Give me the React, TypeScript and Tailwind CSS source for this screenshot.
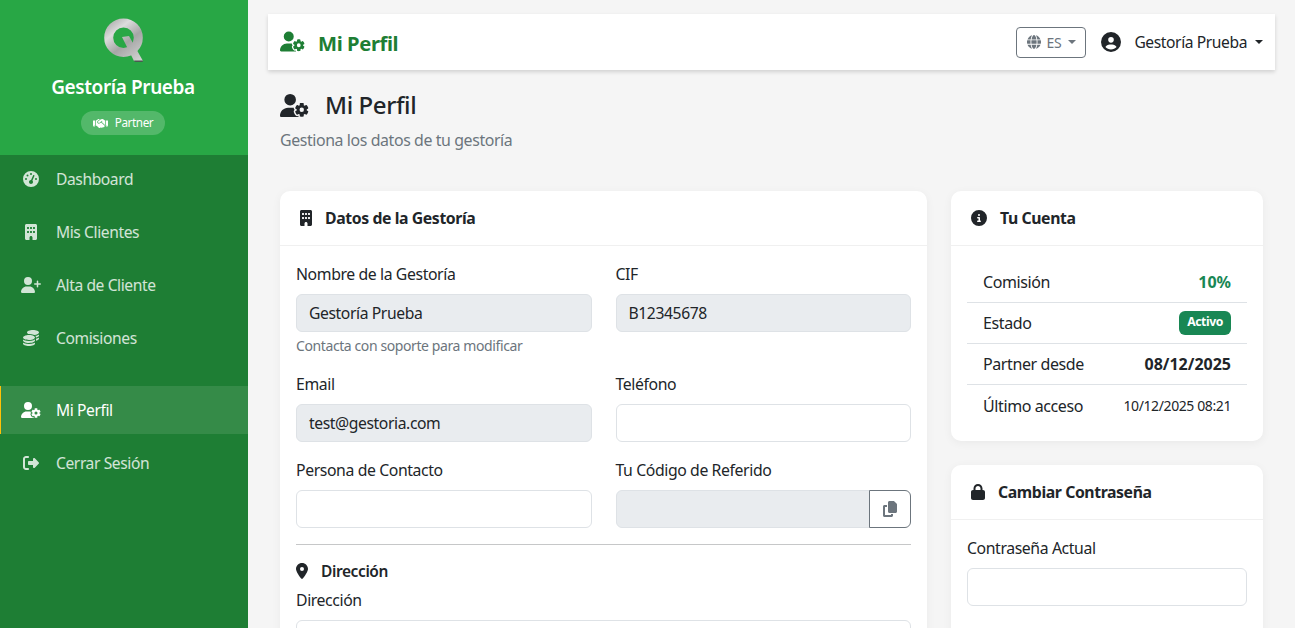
import React from 'react'
import {
  FaBuilding,
  FaCircleInfo,
  FaCircleUser,
  FaCoins,
  FaCopy,
  FaGaugeHigh,
  FaGlobe,
  FaHandshake,
  FaLocationDot,
  FaLock,
  FaRightFromBracket,
  FaUserGear,
  FaUserPlus,
} from 'react-icons/fa6'

const QLogo = () => (
  <svg viewBox="0 0 40 46" className="w-[40px] h-[46px]">
    <defs>
      <linearGradient id="qMetal" gradientUnits="userSpaceOnUse" x1="4" y1="2" x2="36" y2="42">
        <stop offset="0" stopColor="#a2a2a2" />
        <stop offset="0.3" stopColor="#dcdcdc" />
        <stop offset="0.6" stopColor="#a6a6a6" />
        <stop offset="1" stopColor="#cfcfcf" />
      </linearGradient>
    </defs>
    <circle cx="20.500" cy="20.700" r="14.800" fill="none" stroke="url(#qMetal)" strokeWidth="9" />
    <path fill="url(#qMetal)" d="M19 20 L26 19 L40 44 L31 44 Z" />
    <path fill="#4a5a50" d="M31 43.500 L40 43.500 L39.500 45 L32 45 Z" />
  </svg>
)

type NavItemProps = {
  icon: React.ReactNode
  label: string
  active?: boolean
}

const NavItem: React.FC<NavItemProps> = ({ icon, label, active }) => (
  <a
    className={
      active
        ? 'flex items-center h-12 bg-white/10 border-l border-[#ffc107] pl-[20px] text-white'
        : 'flex items-center h-12 border-l border-transparent pl-[20px] text-white/80'
    }
  >
    <span className="w-[20px] mr-[15px] flex justify-center text-[16px]">{icon}</span>
    <span className="mt-[2px] text-[15.6px]">{label}</span>
  </a>
)

const Sidebar = () => (
  <aside className="w-[248px] shrink-0 h-full bg-[#1e7e34]">
    <div className="h-[155px] bg-[#28a745] flex flex-col items-center pt-[17px] pr-[2px]">
      <QLogo />
      <h2 className="mt-[11px] text-[19px] leading-[27px] font-semibold text-white">Gestoría Prueba</h2>
      <span className="mt-[10px] h-[24px] w-[84px] rounded-full bg-white/20 flex items-center justify-center gap-[7px] text-white text-[11.7px]">
        <FaHandshake className="text-[15px]" />
        Partner
      </span>
    </div>
    <nav className="flex flex-col gap-[5px]">
      <NavItem icon={<FaGaugeHigh />} label="Dashboard" />
      <NavItem icon={<FaBuilding />} label="Mis Clientes" />
      <NavItem icon={<FaUserPlus className="text-[20px]" />} label="Alta de Cliente" />
      <NavItem icon={<FaCoins />} label="Comisiones" />
      <div className="h-[14px]" />
      <NavItem icon={<FaUserGear className="text-[20px]" />} label="Mi Perfil" active />
      <NavItem icon={<FaRightFromBracket />} label="Cerrar Sesión" />
    </nav>
  </aside>
)

const TopBar = () => (
  <header className="h-[56px] bg-white shadow-[0_2px_4px_rgba(0,0,0,0.15)] flex items-center justify-between pl-[12px] pr-[12px]">
    <div className="flex items-center gap-[13px] text-[#1e7e34]">
      <FaUserGear className="text-[25px]" />
      <span className="mt-[2px] text-[20.2px] font-bold">Mi Perfil</span>
    </div>
    <div className="flex items-center">
      <button className="w-[70px] h-[31px] border border-[#6c757d] rounded-[4px] flex items-center justify-center gap-[6px] text-[#6c757d] text-[14px]">
        <FaGlobe className="text-[14px]" />
        ES
        <span className="ml-[1px] border-x-[4px] border-x-transparent border-t-[4px] border-t-[#6c757d]" />
      </button>
      <div className="ml-[15px] flex items-center text-[#212529]">
        <FaCircleUser className="text-[20px]" />
        <span className="mt-[2px] ml-[13px] text-[15.6px]">Gestoría Prueba</span>
        <span className="ml-[8px] border-x-[4.5px] border-x-transparent border-t-[4.5px] border-t-[#212529]" />
      </div>
    </div>
  </header>
)

const Field: React.FC<{
  label: string
  value?: string
  disabled?: boolean
  help?: string
  copy?: boolean
}> = ({ label, value, disabled, help, copy }) => (
  <div>
    <label className="block h-[24px] leading-[24px] mb-[8px] text-[15.8px] text-[#212529]">{label}</label>
    <div className="flex">
      <div
        className={
          (disabled ? 'bg-[#e9ecef] ' : 'bg-white ') +
          (copy ? 'rounded-l-[6px] ' : 'rounded-[6px] ') +
          'flex-1 h-[38px] border border-[#dee2e6] pt-[2px] px-[12px] flex items-center text-[15.7px] text-[#212529]'
        }
      >
        {value}
      </div>
      {copy && (
        <button className="w-[42px] h-[38px] -ml-px border border-[#6c757d] rounded-r-[6px] bg-white flex items-center justify-center text-[#6c757d]">
          <FaCopy className="text-[16px]" />
        </button>
      )}
    </div>
    {help && <p className="mt-[3px] h-[21px] leading-[21px] text-[14px] text-[#6c757d]">{help}</p>}
  </div>
)

const Card: React.FC<{
  icon: React.ReactNode
  title: string
  children: React.ReactNode
}> = ({ icon, title, children }) => (
  <section className="bg-white rounded-[10px] shadow-[0_2px_10px_rgba(0,0,0,0.05)]">
    <div className="h-[55px] border-b border-[#f0f0f0] px-[20px] flex items-center gap-[13px] text-[#212529]">
      {icon}
      <h3 className="mt-[2px] text-[15.8px] font-bold">{title}</h3>
    </div>
    {children}
  </section>
)

const InfoRow: React.FC<{ label: string; last?: boolean; children: React.ReactNode }> = ({
  label,
  last,
  children,
}) => (
  <div
    className={
      (last ? '' : 'border-b border-[#dee2e6] ') +
      'h-[41px] px-[16px] flex items-center justify-between text-[16px] text-[#212529]'
    }
  >
    <span>{label}</span>
    {children}
  </div>
)

const App = () => (
  <div className="h-screen flex overflow-hidden bg-[#f5f5f5] font-['Noto_Sans',sans-serif] tracking-[-0.025em]">
    <Sidebar />
    <main className="flex-1 min-w-0 pl-[20px] pr-[20px] pt-[14px]">
      <TopBar />
      <div className="px-[12px]">
        <div className="mt-[17px] h-[36px] flex items-center gap-[16px] text-[#212529]">
          <FaUserGear className="text-[29px]" />
          <h1 className="text-[24px] font-medium">Mi Perfil</h1>
        </div>
        <p className="mt-[5px] h-[24px] leading-[24px] text-[15.9px] text-[#6c757d]">Gestiona los datos de tu gestoría</p>
        <div className="mt-[39px] grid grid-cols-[647px_312px] gap-[24px]">
          <Card icon={<FaBuilding className="w-[12px] h-[16px]" />} title="Datos de la Gestoría">
            <div className="px-[16px] pt-[16px] pb-[16px]">
              <div className="grid grid-cols-2 gap-x-[24px]">
                <Field label="Nombre de la Gestoría" value="Gestoría Prueba" disabled help="Contacta con soporte para modificar" />
                <Field label="CIF" value="B12345678" disabled />
              </div>
              <div className="mt-[16px] grid grid-cols-2 gap-x-[24px]">
                <Field label="Email" value="test@gestoria.com" disabled />
                <Field label="Teléfono" />
              </div>
              <div className="mt-[16px] grid grid-cols-2 gap-x-[24px]">
                <Field label="Persona de Contacto" />
                <Field label="Tu Código de Referido" disabled copy />
              </div>
              <hr className="mt-[16px] border-t border-[#c6c7c8]" />
              <div className="mt-[14px] h-[24px] flex items-center gap-[13px] text-[#212529]">
                <FaLocationDot className="w-[12px] h-[16px]" />
                <span className="mt-[2px] text-[15.5px] font-semibold">Dirección</span>
              </div>
              <div className="mt-[5px]">
                <Field label="Dirección" />
              </div>
            </div>
          </Card>
          <div className="flex flex-col gap-[24px]">
            <Card icon={<FaCircleInfo className="w-[16px] h-[16px]" />} title="Tu Cuenta">
              <div className="px-[16px] pt-[16px] pb-[15px]">
                <InfoRow label="Comisión">
                  <span className="font-bold tracking-normal text-[#198754]">10%</span>
                </InfoRow>
                <InfoRow label="Estado">
                  <span className="h-[24px] pb-[2px] px-[8px] rounded-[6px] bg-[#198754] text-white text-[12.2px] font-bold flex items-center">Activo</span>
                </InfoRow>
                <InfoRow label="Partner desde">
                  <span className="font-bold tracking-normal">08/12/2025</span>
                </InfoRow>
                <InfoRow label="Último acceso" last>
                  <span className="text-[14px]">10/12/2025 08:21</span>
                </InfoRow>
              </div>
            </Card>
            <Card icon={<FaLock className="w-[14px] h-[16px]" />} title="Cambiar Contraseña">
              <div className="px-[16px] pt-[16px] pb-[60px]">
                <Field label="Contraseña Actual" />
              </div>
            </Card>
          </div>
        </div>
      </div>
    </main>
  </div>
)

export default App
